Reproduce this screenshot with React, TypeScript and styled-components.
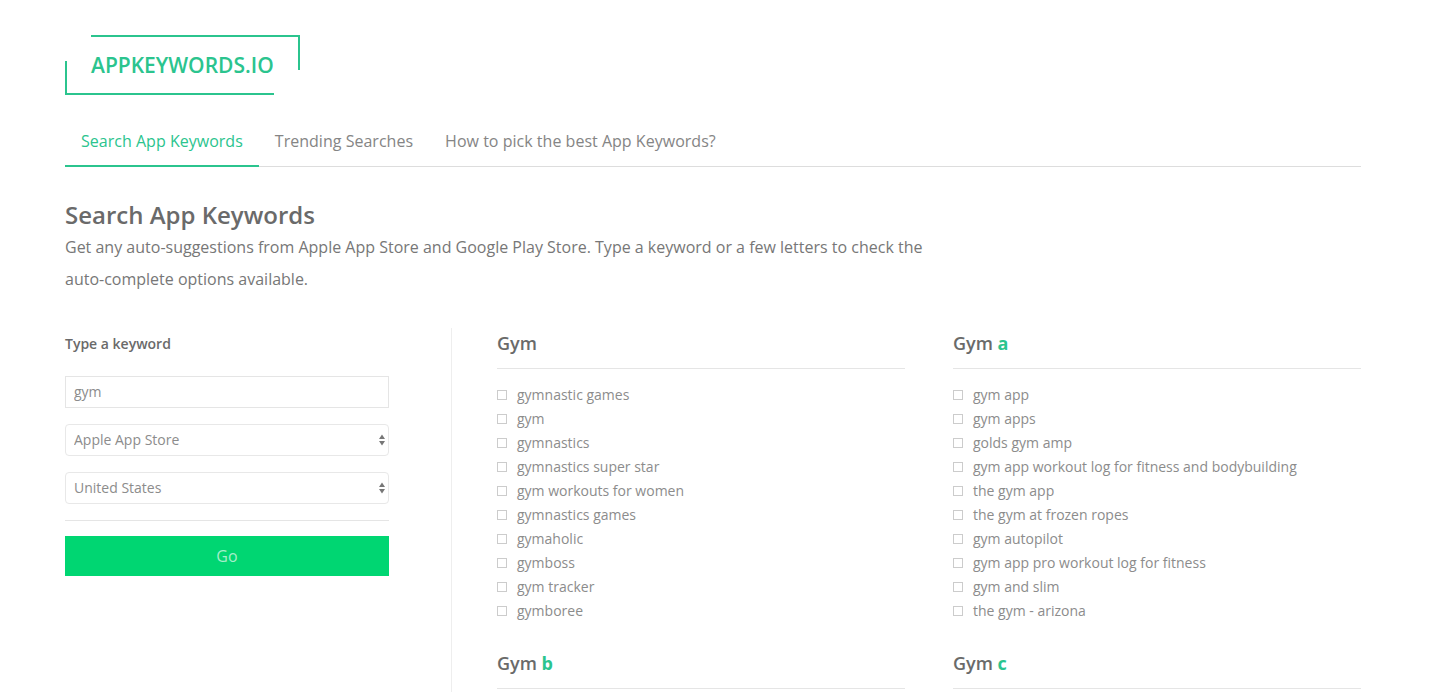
import React from "react";
import styled, { createGlobalStyle } from "styled-components";

const Global = createGlobalStyle`
  html, body { margin: 0; padding: 0; height: 692px; overflow: hidden; background: #fff; }
  body { font-family: "Open Sans", "Liberation Sans", sans-serif; color: #777; }
`;

const Page = styled.div`
  width: 1296px;
  margin-left: 65px;
  padding-top: 35px;
`;

const Logo = styled.a`
  position: relative;
  display: block;
  width: 235px;
  height: 60px;
  box-sizing: border-box;
  padding: 15px 0 0 26px;
  color: #2bc48e;
  font-size: 21px;
  line-height: 30px;
  font-weight: 600;
  white-space: nowrap;

  &::before {
    content: "";
    position: absolute;
    left: 26px;
    top: 0;
    width: 207px;
    height: 33px;
    border-top: 2px solid #2bc48e;
    border-right: 2px solid #2bc48e;
  }
  &::after {
    content: "";
    position: absolute;
    left: 0;
    top: 26px;
    width: 207px;
    height: 32px;
    border-left: 2px solid #2bc48e;
    border-bottom: 2px solid #2bc48e;
  }
`;

const Tabs = styled.nav`
  display: flex;
  margin-top: 22px;
  border-bottom: 1px solid #ddd;
  height: 50px;
  box-sizing: border-box;
`;

const Tab = styled.a<{ $active?: boolean }>`
  padding: 0 16px;
  height: 50px;
  box-sizing: border-box;
  font-size: 16px;
  line-height: 48px;
  letter-spacing: 0.02px;
  color: ${(p) => (p.$active ? "#2bc48e" : "#858585")};
  border-bottom: 2px solid ${(p) => (p.$active ? "#2bc48e" : "transparent")};
`;

const Title = styled.h1`
  margin: 31px 0 0;
  font-size: 24px;
  line-height: 33px;
  font-weight: 600;
  color: #6a6a6a;
`;

const Intro = styled.p`
  margin: 0;
  width: 880px;
  font-size: 16px;
  line-height: 32px;
  color: #777;
`;

const Body = styled.div`
  display: flex;
  margin-top: 33px;
`;

const Side = styled.form`
  width: 387px;
  box-sizing: border-box;
  padding-right: 62px;
  border-right: 1px solid #eee;
  height: 500px;
`;

const Label = styled.label`
  display: block;
  font-size: 14px;
  line-height: 32px;
  font-weight: 600;
  color: #6a6a6a;
  margin-bottom: 16px;
`;

const Input = styled.input`
  display: block;
  width: 100%;
  height: 32px;
  box-sizing: border-box;
  border: 1px solid #e5e5e5;
  padding: 0 8px 2px;
  font: 14px "Open Sans", sans-serif;
  color: #8c8c8c;
  outline: none;
  margin-bottom: 16px;
`;

const SelectWrap = styled.div`
  position: relative;
  margin-bottom: 16px;
  svg { position: absolute; right: 3px; top: 10px; }
`;

const Select = styled.select`
  display: block;
  width: 100%;
  height: 32px;
  box-sizing: border-box;
  appearance: none;
  background: #fff;
  border: 1px solid #e8e8e8;
  border-radius: 4px;
  padding: 0 8px 2px;
  font: 14px "Open Sans", sans-serif;
  color: #8c8c8c;
  outline: none;
`;

const Rule = styled.hr`
  border: 0;
  border-top: 1px solid #e5e5e5;
  margin: 0 0 15px;
`;

const Go = styled.button`
  display: block;
  width: 100%;
  height: 40px;
  border: 0;
  background: #00d672;
  color: #a5eecb;
  font: 16px "Open Sans", sans-serif;
`;

const Results = styled.div`
  flex: 1;
  display: grid;
  grid-template-columns: 408px 408px;
  column-gap: 48px;
  margin-left: 45px;
  align-content: start;
`;

const Group = styled.section`
  margin-bottom: 26px;
`;

const GroupTitle = styled.h2`
  margin: 0;
  height: 41px;
  box-sizing: border-box;
  border-bottom: 1px solid #e5e5e5;
  font-size: 18px;
  line-height: 30px;
  font-weight: 600;
  color: #6a6a6a;
  b { color: #2bc48e; font-weight: 700; }
`;

const List = styled.ul`
  list-style: none;
  margin: 13px 0 0;
  padding: 0;
`;

const Item = styled.li`
  display: flex;
  align-items: center;
  height: 24px;
  font-size: 14px;
  color: #8c8c8c;
  white-space: nowrap;
`;

const Box = styled.span`
  width: 10px;
  height: 10px;
  box-sizing: border-box;
  border: 1px solid #ccc;
  margin: 2px 10px 0 0;
  flex: none;
`;

const Updown = () => (
  <svg width="8" height="12" viewBox="0 0 8 12">
    <path d="M4 0.5 L7 5 H1 Z M1 7 H7 L4 11.5 Z" fill="#777" />
  </svg>
);

const groups: { suffix?: string; items: string[] }[] = [
  {
    items: ["gymnastic games", "gym", "gymnastics", "gymnastics super star", "gym workouts for women", "gymnastics games", "gymaholic", "gymboss", "gym tracker", "gymboree"],
  },
  {
    suffix: "a",
    items: ["gym app", "gym apps", "golds gym amp", "gym app workout log for fitness and bodybuilding", "the gym app", "the gym at frozen ropes", "gym autopilot", "gym app pro workout log for fitness", "gym and slim", "the gym - arizona"],
  },
  { suffix: "b", items: [] },
  { suffix: "c", items: [] },
];

export default function App() {
  return (
    <Page>
      <Global />
      <Logo>APPKEYWORDS.IO</Logo>
      <Tabs>
        <Tab $active>Search App Keywords</Tab>
        <Tab>Trending Searches</Tab>
        <Tab>How to pick the best App Keywords?</Tab>
      </Tabs>
      <Title>Search App Keywords</Title>
      <Intro>
        Get any auto-suggestions from Apple App Store and Google Play Store. Type a keyword or a few letters to check the auto-complete options available.
      </Intro>
      <Body>
        <Side>
          <Label>Type a keyword</Label>
          <Input defaultValue="gym" />
          <SelectWrap>
            <Select defaultValue="Apple App Store">
              <option>Apple App Store</option>
              <option>Google Play Store</option>
            </Select>
            <Updown />
          </SelectWrap>
          <SelectWrap>
            <Select defaultValue="United States">
              <option>United States</option>
            </Select>
            <Updown />
          </SelectWrap>
          <Rule />
          <Go type="button">Go</Go>
        </Side>
        <Results>
          {groups.map((g) => (
            <Group key={g.suffix ?? "root"}>
              <GroupTitle>
                Gym {g.suffix && <b>{g.suffix}</b>}
              </GroupTitle>
              {g.items.length > 0 && (
                <List>
                  {g.items.map((t) => (
                    <Item key={t}>
                      <Box />
                      {t}
                    </Item>
                  ))}
                </List>
              )}
            </Group>
          ))}
        </Results>
      </Body>
    </Page>
  );
}
